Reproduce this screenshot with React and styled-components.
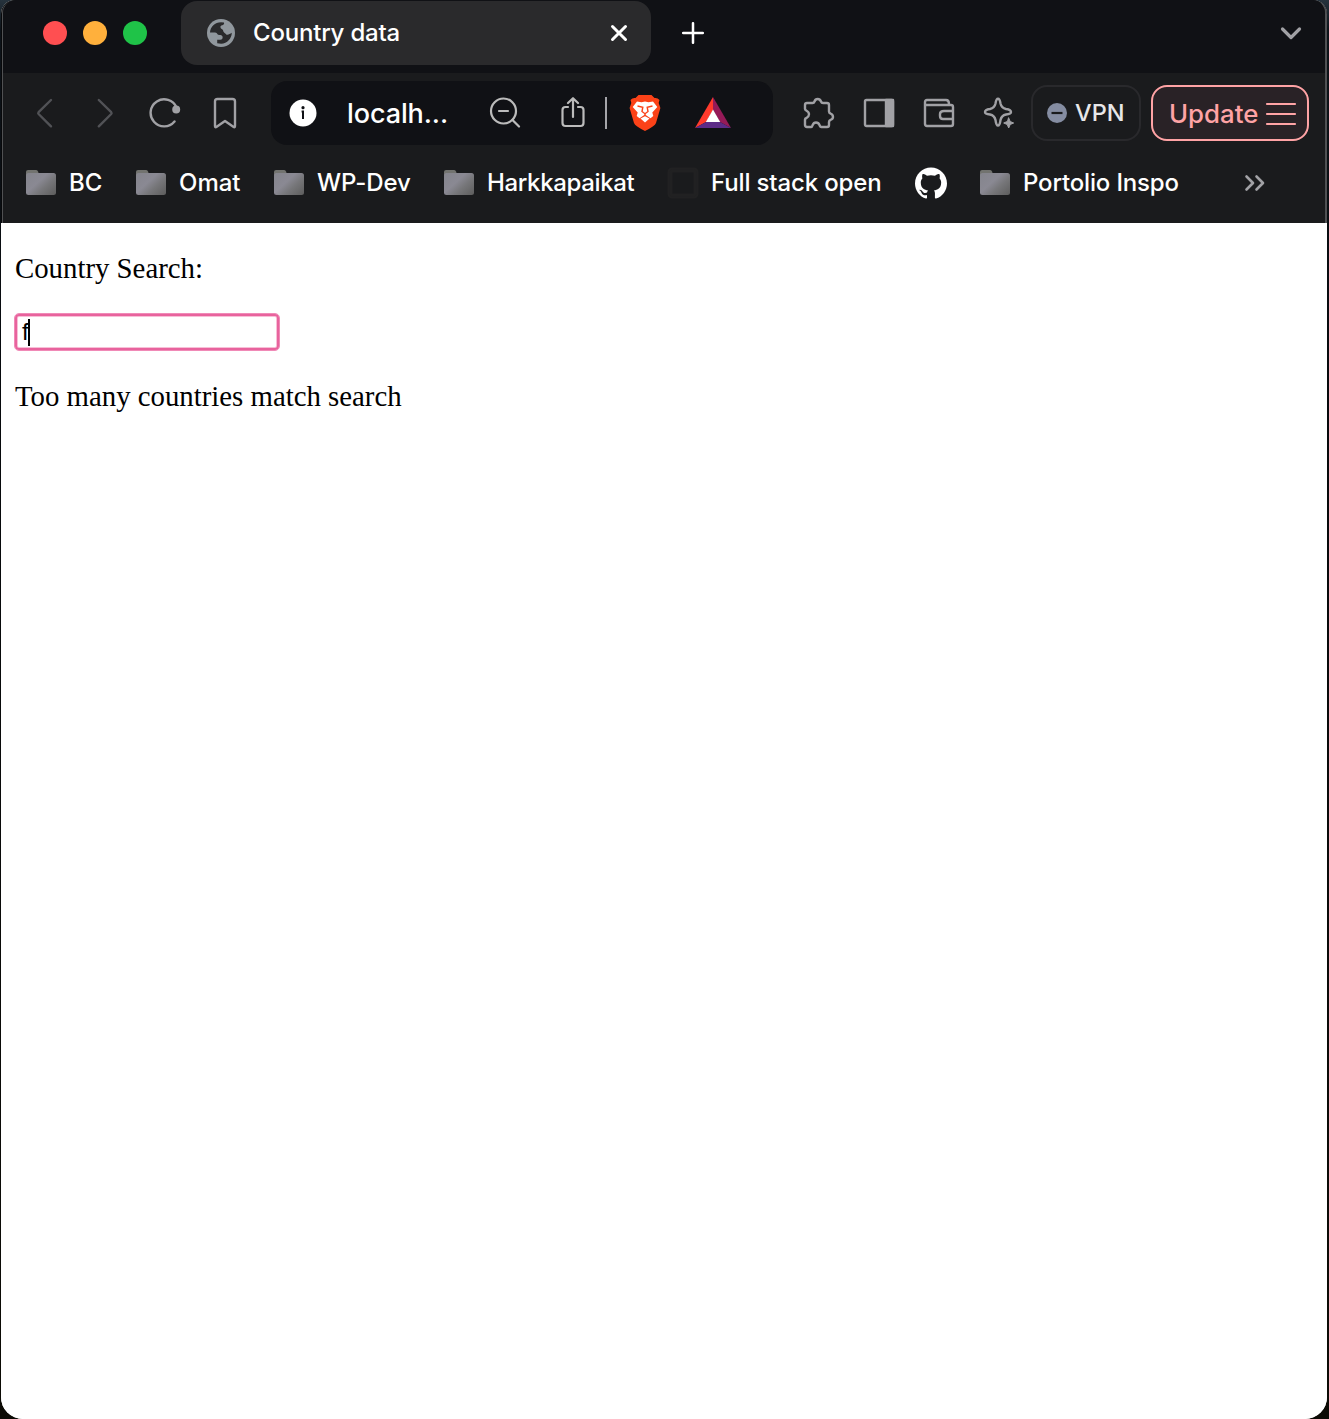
import React from 'react';
import styled, { createGlobalStyle } from 'styled-components';
import { SiGithub } from 'react-icons/si';

const Global = createGlobalStyle`
  * { box-sizing: border-box; }
  html, body { margin: 0; background: #0d0d08; }
  svg { display: block; flex: none; }
`;

const Desktop = styled.div`
  width: 1329px;
  height: 1419px;
  padding: 0 2px 0 1px;
  background: linear-gradient(#26333d 0, #0d1319 30px, #07090c 400px, #0c0b05 1419px);
  overflow: hidden;
`;

const Window = styled.div`
  height: 1419px;
  display: flex;
  flex-direction: column;
  border-radius: 14px 14px 22px 22px;
  overflow: hidden;
  background: #fff;
  font-family: Inter, 'Liberation Sans', sans-serif;
`;

const Frame = styled.div`
  flex: none;
  padding-left: 1px;
  background: #08090b;
`;

const Chrome = styled.header`
  height: 223px;
  border: solid #505153;
  border-width: 0 2px 0 1px;
  border-radius: 14px 14px 0 0;
  background: #1a1b1d;
  overflow: hidden;
`;

const TabStrip = styled.div`
  height: 73px;
  display: flex;
  padding: 1px 22px 8px 40px;
  background: #101115;
  align-items: center;
`;

const Lights = styled.div`
  display: flex;
  gap: 16px;
  margin-right: 34px;
`;

const Light = styled.i`
  width: 24px;
  height: 24px;
  border-radius: 50%;
  background: ${(p) => p.$color};
`;

const Tab = styled.div`
  width: 470px;
  height: 64px;
  border-radius: 16px;
  background: #2a2a2c;
  display: flex;
  align-items: center;
  padding: 0 22px 0 25px;
  margin-right: 31px;
`;

const Label = styled.span`
  width: ${(p) => p.$w}px;
  font-size: ${(p) => p.$size || 24}px;
  line-height: 32px;
  letter-spacing: ${(p) => p.$ls || 0}px;
  font-weight: ${(p) => p.$weight || 450};
  color: ${(p) => p.$color || '#fff'};
  padding-top: ${(p) => p.$drop || 0}px;
  white-space: nowrap;
  flex: none;
`;

const TabTitle = styled(Label)`
  margin-left: 17px;
`;

const Push = styled.div`
  flex: 1;
`;

const Toolbar = styled.div`
  height: 80px;
  display: flex;
  align-items: center;
  padding: 0 0 0 26px;
`;

const NavIcons = styled.div`
  display: flex;
  flex: none;
  gap: 28px;
  margin-right: 30px;
`;

const Address = styled.div`
  width: 502px;
  flex: none;
  height: 64px;
  border-radius: 16px;
  background: #101115;
  display: flex;
  align-items: center;
  padding: 0 42px 0 16px;
`;

const Host = styled(Label)`
  margin: 0 40px 0 28px;
`;

const Divider = styled.i`
  width: 2px;
  height: 32px;
  background: #a5a5a9;
  margin: 0 22px 0 16px;
`;

const Shields = styled.div`
  margin-right: 34px;
`;

const ToolIcons = styled.div`
  display: flex;
  flex: none;
  gap: 28px;
  margin: 0 16px 0 30px;
`;

const Pill = styled.div`
  width: ${(p) => p.$w}px;
  height: 56px;
  border-radius: 16px;
  border: 2px solid ${(p) => p.$line};
  background: ${(p) => p.$fill};
  display: flex;
  align-items: center;
  padding-left: ${(p) => p.$pad}px;
  gap: ${(p) => p.$gap}px;
  margin-right: 10px;
  flex: none;
`;

const Bookmarks = styled.nav`
  height: 60px;
  display: flex;
  align-items: center;
  padding: 0 0 0 23px;
`;

const Bookmark = styled.div`
  display: flex;
  align-items: center;
  gap: ${(p) => p.$gap ?? 13}px;
  margin-right: ${(p) => p.$after}px;
`;

const Page = styled.main`
  padding: 29px 14px;
  flex: 1;
  display: flex;
  flex-direction: column;
  align-items: flex-start;
  background: #fff;
`;

const Text = styled.p`
  margin: 0;
  font: 28.8px/32px 'Liberation Serif', serif;
  color: #000;
  white-space: nowrap;
`;

const SearchField = styled.div`
  width: 266px;
  height: 38px;
  margin: 29px 0 29px -1px;
  border: 1px solid #f08ab7;
  border-radius: 5px;
  box-shadow: inset 0 0 0 2px #e8639d, inset 0 0 0 3px #f8bfd7;
  display: flex;
  align-items: center;
  padding-left: 7px;
  font: 24px/28px 'Liberation Sans', sans-serif;
  color: #000;
`;

const Caret = styled.i`
  width: 2px;
  height: 27px;
  margin-left: -1px;
  background: #000;
`;

const Icon = ({ w = 32, h = 32, color = '#a1a1a5', sw = 2.4, children }) => (
  <svg width={w} height={h} viewBox={`0 0 ${w} ${h}`} fill="none" stroke={color} strokeWidth={sw} strokeLinecap="round" strokeLinejoin="round">
    {children}
  </svg>
);

const Globe = () => (
  <svg width="30" height="30" viewBox="0 0 30 30">
    <circle cx="15" cy="15" r="14" fill="#90979d" />
    <path d="M4 14.5C4.3 9 9 4.2 15 4.2L18 4.6C18.4 6 17.8 7 16.3 7.2C14.8 7.3 14.2 8.2 14.5 9.5C14.8 11 16.7 11 17 12.2C17.3 14.4 19.2 15 20.2 16.4C21.8 17.5 23.8 15.9 25.8 14.8C25.7 20.6 21.2 25.5 15.2 25.8L11.2 25.2V21.8H14.3C16.2 21.5 17 20 16.5 18.4C16 16.6 13 17.5 11.8 16.4C10.8 15.4 10.6 14.5 9 14.5Z" fill="#2a2a2c" />
  </svg>
);

const Folder = () => (
  <svg width="30" height="26" viewBox="0 0 30 26">
    <defs>
      <linearGradient id="folder" x1="0" y1="0.1" x2="1" y2="0.9">
        <stop offset="0" stopColor="#85858d" />
        <stop offset="0.4" stopColor="#8a8993" />
        <stop offset="0.65" stopColor="#767679" />
        <stop offset="1" stopColor="#606060" />
      </linearGradient>
    </defs>
    <path d="M0 6V2Q0 0 2 0H10Q12 0 12.5 3V6Z" fill="#72736f" />
    <rect y="3" width="30" height="22" rx="2.5" fill="url(#folder)" />
  </svg>
);

const BraveLion = () => (
  <svg width="32" height="36" viewBox="0 0 32 36">
    <path d="M9.5 0H22.5L25.5 3Q28.5 2.5 30.5 5L29.7 8L31.4 13L27 28Q26 31 16 36Q6 31 5 28L.6 13L2.3 8L1.5 5Q3.5 2.5 6.5 3Z" fill="#fb4218" />
    <path d="M8 6.5L12.5 7.3L16 6.6L19.5 7.3L24 6.5L28.3 12L23.3 17.6L24.3 21L21.5 23.2L16 19.5L10.5 23.2L7.7 21L8.7 17.6L3.7 12Z" fill="#fff" />
    <path d="M16 21.3L20.5 23.6L16 27.5L11.5 23.6Z" fill="#fff" />
    <path d="M8.5 11L13.8 12.2L13 16.5L16 18.7L19 16.5L18.2 12.2L23.5 11M16 18.7V21" fill="none" stroke="#fb4218" strokeWidth="1.4" />
  </svg>
);

const Triangle = () => (
  <svg width="36" height="32" viewBox="0 0 36 32">
    <path d="M18 0V13L11 25L0 31Z" fill="#ff3a2c" />
    <path d="M18 0L36 31L25 25L18 13Z" fill="#951a58" />
    <path d="M0 31L11 25H25L36 31Z" fill="#5c2b87" />
    <path d="M18 12.5L25.2 25H10.8Z" fill="#fff" />
  </svg>
);

export default function App() {
  return (
    <Desktop>
      <Global />
      <Window>
        <Frame>
          <Chrome>
            <TabStrip>
              <Lights>
                <Light $color="#ff4f51" />
                <Light $color="#ffb03c" />
                <Light $color="#1fc348" />
              </Lights>
              <Tab>
                <Globe />
                <TabTitle $w={150} $ls={-0.2}>Country data</TabTitle>
                <Push />
                <Icon w={20} h={20} color="#fff" sw={3}><path d="M3.5 3.5L16.5 16.5M16.5 3.5L3.5 16.5" /></Icon>
              </Tab>
              <Icon w={22} h={22} color="#fff" sw={2.5}><path d="M11 1.2V20.8M1.2 11H20.8" /></Icon>
              <Push />
              <Icon w={24} h={24} sw={3.2}><path d="M3.5 8L12 16.5L20.5 8" /></Icon>
            </TabStrip>
            <Toolbar>
              <NavIcons>
                <Icon color="#515256"><path d="M22 3L9.6 15.2Q8.8 16.1 9.6 17L22 29.3" /></Icon>
                <Icon color="#515256"><path d="M9.8 3L22.2 15.2Q23 16.1 22.2 17L9.8 29.3" /></Icon>
                <Icon>
                  <path d="M25.5 24.5A13.5 13.5 0 1 1 27.5 10.5" />
                  <circle cx="27.2" cy="12.6" r="2.8" fill="#a1a1a5" />
                </Icon>
                <Icon><path d="M6 4.5Q6 2 8.5 2H23.5Q26 2 26 4.5V29Q26 31 24.3 29.7L16 24L7.7 29.7Q6 31 6 29Z" /></Icon>
              </NavIcons>
              <Address>
                <svg width="32" height="32" viewBox="0 0 32 32">
                  <circle cx="16" cy="16" r="13.5" fill="#fff" />
                  <circle cx="16" cy="10.7" r="1.6" fill="#101115" />
                  <path d="M14.6 14.4H16V22" stroke="#101115" strokeWidth="2" fill="none" />
                </svg>
                <Host $w={102} $size={27} $ls={-0.1} $drop={1}>localh...</Host>
                <Icon color="#bbb" sw={2.2}><circle cx="14.5" cy="14" r="12.5" /><path d="M10 14H19M23.5 23L30 29.5" /></Icon>
                <Push />
                <Icon color="#bbb" sw={2.2}><path d="M11 10H8.5Q5.5 10 5.5 13V26Q5.5 29 8.5 29H23.5Q26.5 29 26.5 26V13Q26.5 10 23.5 10H21M16 20V1.5M11 6L16 1.2L21 6" /></Icon>
                <Divider />
                <Shields><BraveLion /></Shields>
                <Triangle />
              </Address>
              <ToolIcons>
                <Icon><path d="M4 6H9.5Q11 6 11.5 4.5Q12.3 2 14.7 2Q17 2 18 4.5Q18.5 6 20 6H24Q26 6 26 8V14.5Q26 16 27.5 16.5Q30 17.5 30 20Q30 22 27.5 23Q26 23.5 26 25V28Q26 30 24 30H18.5Q17 30 16.5 28Q15.5 25.5 13 25.5Q10.5 25.5 9.7 28Q9 30 8 30H4Q2 30 2 28V22.5Q2 21.5 3.5 21Q6 19.5 6 17.3Q6 15 3.5 13.7Q2 13 2 12V8Q2 6 4 6Z" /></Icon>
                <Icon><rect x="2" y="3" width="28" height="26" rx="1.5" /><path d="M23 3H30V29H23Z" fill="#a1a1a5" /></Icon>
                <Icon><path d="M2 8H28Q30 8 30 10V27Q30 29 28 29H4Q2 29 2 27V5Q2 3 4 3H23Q26 3 26 7M30 14H21Q17 14 17 17V19Q17 22 20 22H30" /></Icon>
                <Icon>
                  <path d="M15 1.7Q16.8 1.7 17.5 6.5Q18.5 11 23 12Q28 12.8 28 15Q28 17 23 17.5Q18.5 18.5 17.5 23Q16.8 28.5 15 28.5Q13.2 28.5 12.5 23Q11.5 18.5 7 17.5Q2 17 2 15Q2 12.8 7 12Q11.5 11 12.5 6.5Q13.2 1.7 15 1.7Z" />
                  <path d="M25.7 21L27.2 24.5L30.7 26L27.2 27.5L25.7 31L24.2 27.5L20.7 26L24.2 24.5Z" fill="#a1a1a5" strokeWidth="1" />
                </Icon>
              </ToolIcons>
              <Pill $w={110} $line="#29292c" $fill="#1a1b1d" $pad={14} $gap={8}>
                <svg width="20" height="20" viewBox="0 0 20 20"><circle cx="10" cy="10" r="10" fill="#858da2" /><path d="M4.5 10H15.5" stroke="#1a1b1d" strokeWidth="2.2" /></svg>
                <Label $w={50} $size={23.5} $color="#e7e7e9">VPN</Label>
              </Pill>
              <Pill $w={158} $line="#ffa3a5" $fill="#292226" $pad={16} $gap={6}>
                <Label $w={90} $size={25.8} $drop={2} $color="#ffa3a5">Update</Label>
                <Icon color="#ffa3a5" sw={2.2}><path d="M2 7H30M2 17H30M2 27H30" /></Icon>
              </Pill>
            </Toolbar>
            <Bookmarks>
              <Bookmark $after={34}><Folder /><Label $w={33}>BC</Label></Bookmark>
              <Bookmark $after={33}><Folder /><Label $w={62}>Omat</Label></Bookmark>
              <Bookmark $after={33}><Folder /><Label $w={94} $ls={-0.15}>WP-Dev</Label></Bookmark>
              <Bookmark $after={31}><Folder /><Label $w={149} $ls={-0.35}>Harkkapaikat</Label></Bookmark>
              <Bookmark $after={32} $gap={12}>
                <Icon w={32} h={32} color="#212122" sw={3}><rect x="2" y="2" width="28" height="28" rx="3" /><rect x="4" y="4" width="24" height="24" rx="2" /></Icon>
                <Label $w={172} $ls={-0.14}>Full stack open</Label>
              </Bookmark>
              <Bookmark $after={33}><SiGithub size={32} color="#fff" /></Bookmark>
              <Bookmark $after={63}><Folder /><Label $w={157} $ls={-0.16}>Portolio Inspo</Label></Bookmark>
              <Icon w={24} h={24} sw={2.6}><path d="M3.5 5.5L10 12L3.5 18.5M13.5 5.5L20 12L13.5 18.5" /></Icon>
            </Bookmarks>
          </Chrome>
        </Frame>
        <Page>
          <Text>Country Search:</Text>
          <SearchField>f<Caret /></SearchField>
          <Text>Too many countries match search</Text>
        </Page>
      </Window>
    </Desktop>
  );
}
